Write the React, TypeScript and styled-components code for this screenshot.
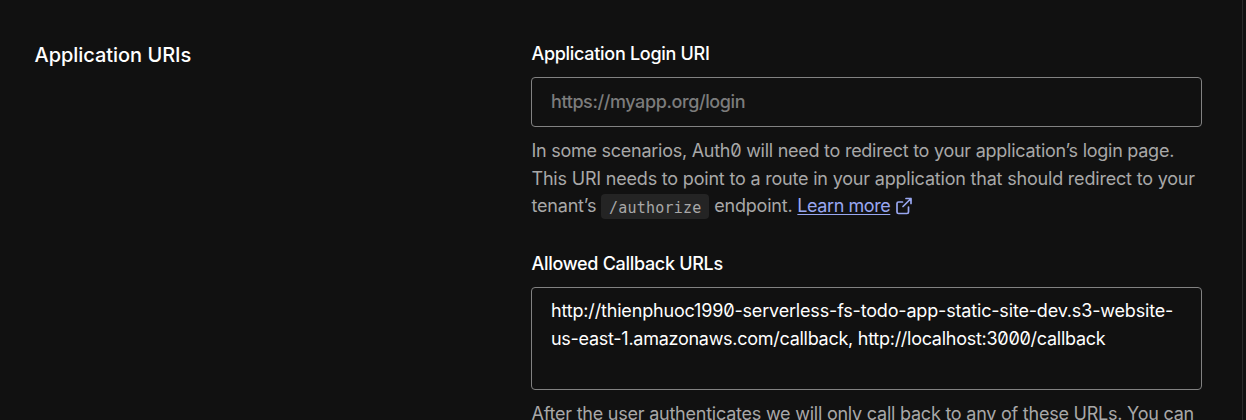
import React from "react";
import styled, { createGlobalStyle } from "styled-components";

const Global = createGlobalStyle`
  * { box-sizing: border-box; }
  body { margin: 0; background: #111111; overflow: hidden; font-family: Inter, sans-serif; font-feature-settings: "zero"; }
`;
const Page = styled.main`
  width: 1243px; height: 420px; overflow: hidden; display: grid;
  grid-template-columns: 497px 671px; padding: 40px 0 0 34px;
  border-right: 1px solid #2a2a2a; background: #111111;
`;
const Title = styled.h2`margin: 0; padding-left: 0.5px; font-size: 20px; line-height: 30px; font-weight: 500; color: #fff; letter-spacing: -0.04px;`;
const Fields = styled.div`display: flex; flex-direction: column; gap: 30px;`;
const Field = styled.div`display: flex; flex-direction: column;`;
const Label = styled.label`font-size: 18px; line-height: 28px; font-weight: 500; color: #fff; letter-spacing: -0.3px; margin-bottom: 9px; padding-left: 0.5px;`;
const Input = styled.input`
  height: 50px; border: 1px solid #828282; border-radius: 4px; background: #111; padding: 0 19px 2px;
  font: 500 18px/28px Inter, sans-serif; letter-spacing: -0.4px; color: #fff; outline: none;
  &::placeholder { color: #7c7c7c; opacity: 1; }
`;
const Area = styled.div`
  height: 103px; border: 1px solid #828282; border-radius: 4px; background: #111; padding: 9px 19px;
  font-size: 18px; line-height: 28px; color: #fff; outline: none; white-space: nowrap;
`;
const Help = styled.p`margin: 10px 0 0; padding-left: 0.5px; font-size: 18px; line-height: 27.5px; letter-spacing: -0.23px; color: #a8a8a8; white-space: nowrap;`;
const Line = styled.span<{ $tracking: number }>`display: block; letter-spacing: ${(p) => p.$tracking}px;`;
const Code = styled.code`
  padding: 5px 8px 2px; border-radius: 4px; background: #242424;
  font: 15px/1 "DejaVu Sans Mono", monospace; letter-spacing: 0.2px; vertical-align: -1px;
`;
const Link = styled.a`color: #99a7f1; text-decoration: underline; text-underline-offset: 2px; letter-spacing: -0.43px;`;
const Icon = styled.svg`width: 18px; height: 18px; margin-left: 5px; vertical-align: -3px; color: #99a7f1;`;

export default function App() {
  return (
    <>
      <Global />
      <Page>
        <Title>Application URIs</Title>
        <Fields>
          <Field>
            <Label htmlFor="login">Application Login URI</Label>
            <Input id="login" placeholder="https://myapp.org/login" />
            <Help>
              <Line $tracking={-0.26}>In some scenarios, Auth0 will need to redirect to your application’s login page.</Line>
              <Line $tracking={-0.195}>This URI needs to point to a route in your application that should redirect to your</Line>
              <Line $tracking={-0.2}>
                tenant’s <Code>/authorize</Code> endpoint. <Link href="#">Learn more</Link>
                <Icon viewBox="0 0 18 18" fill="none" stroke="currentColor" strokeWidth="1.7" strokeLinecap="round" strokeLinejoin="round">
                  <path d="M11 1.5h5v5M16 1.5l-8 8M13.5 10v5a1.5 1.5 0 0 1-1.5 1.5H3.5A1.5 1.5 0 0 1 2 15V6.5A1.5 1.5 0 0 1 3.5 5H7.5" />
                </Icon>
              </Line>
            </Help>
          </Field>
          <Field>
            <Label id="callbacks-label">Allowed Callback URLs</Label>
            <Area role="textbox" aria-multiline="true" aria-labelledby="callbacks-label" tabIndex={0}>
              <Line $tracking={-0.17}>http://thienphuoc1990-serverless-fs-todo-app-static-site-dev.s3-website-</Line>
              <Line $tracking={-0.27}>us-east-1.amazonaws.com/callback, http://localhost:3000/callback</Line>
            </Area>
            <Help>After the user authenticates we will only call back to any of these URLs. You can</Help>
          </Field>
        </Fields>
      </Page>
    </>
  );
}
